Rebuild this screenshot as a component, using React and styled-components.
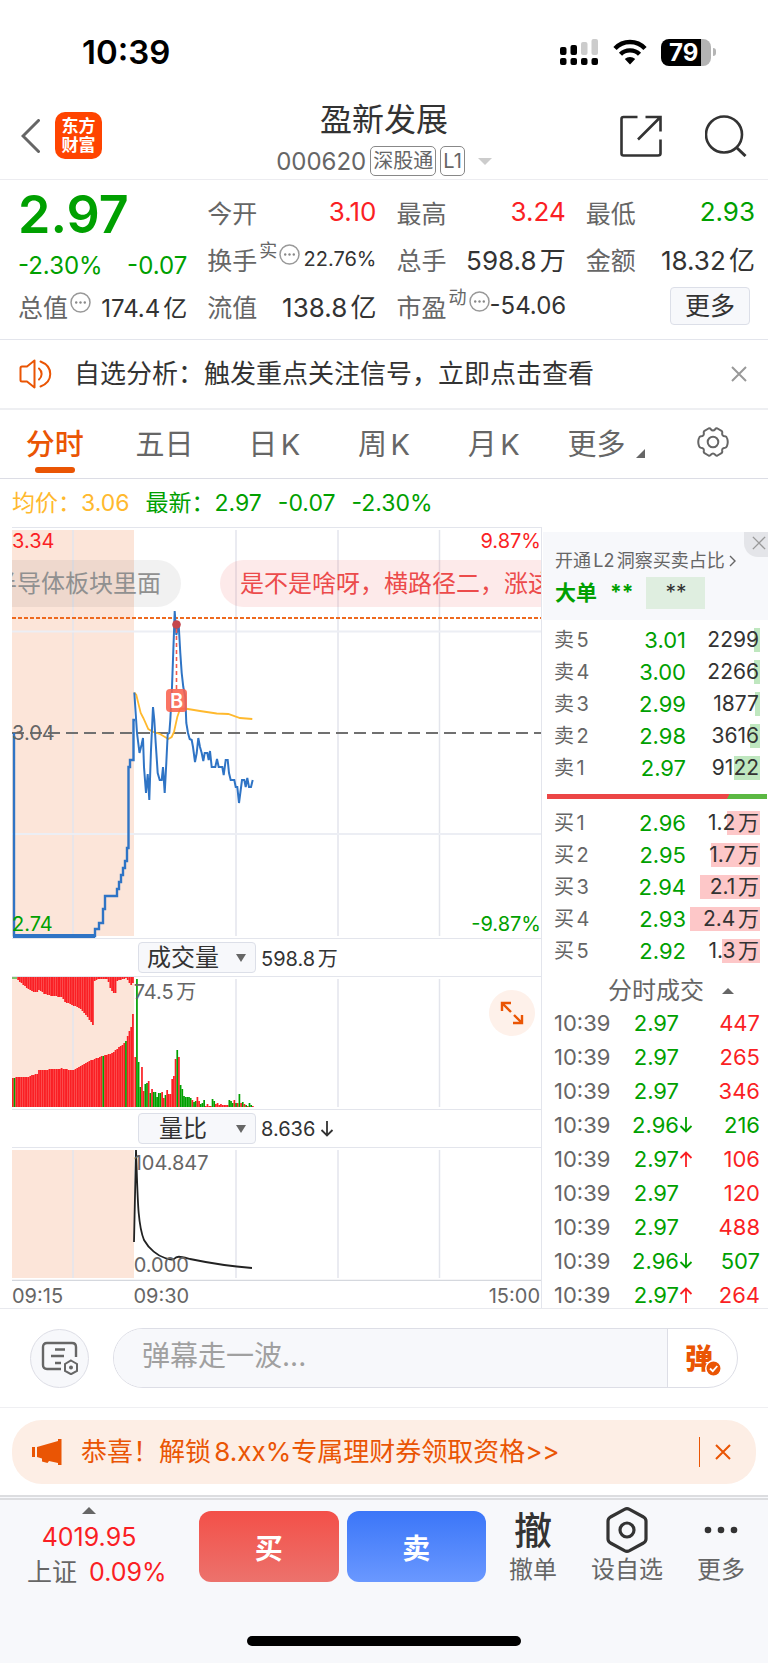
import React, { useState } from 'react';
import styled, { createGlobalStyle } from 'styled-components';

const colors = {
  up: '#fa1f24',
  down: '#00a000',
  brand: '#ea5504',
  text: '#333333',
  sub: '#666666',
  muted: '#999999',
  line: '#e3e5ec',
  panel: '#f7f8fb',
  avg: '#ffb92e',
  price: '#2f74c5',
  preMarket: '#fce5d9',
};

const GlobalStyle = createGlobalStyle`
  * {
    box-sizing: border-box;
  }

  body {
    margin: 0;
    background: #fff;
    color: ${colors.text};
    font-family: Inter, 'Noto Sans CJK SC', sans-serif;
    text-autospace: normal;
  }

  button,
  input,
  select {
    margin: 0;
    padding: 0;
    border: 0;
    background: none;
    color: inherit;
    font-family: inherit;
  }

  svg {
    display: block;
    flex: none;
  }
`;

const Page = styled.div`
  width: 100%;
  overflow: hidden;
`;

const IconButton = styled.button`
  display: flex;
  align-items: center;
  justify-content: center;
  color: ${({ $color }) => $color || colors.text};
`;

/* ---------- status bar ---------- */

const StatusBar = styled.div`
  display: flex;
  align-items: center;
  justify-content: space-between;
  height: 92px;
  padding: 12px 52px 0 82px;
`;

const Clock = styled.span`
  color: #000;
  font-size: 33px;
  font-weight: 600;
`;

const StatusIcons = styled.div`
  display: flex;
  align-items: center;
  gap: 14px;
`;

const Battery = styled.div`
  display: flex;
  align-items: center;
  gap: 2px;

  &::after {
    content: '';
    width: 3px;
    height: 8px;
    border-radius: 0 4px 4px 0;
    background: #b5b5b5;
  }
`;

const BatteryBody = styled.span`
  width: 50px;
  height: 27px;
  padding-left: 8px;
  border-radius: 8px;
  background: linear-gradient(90deg, #000 79%, #b3b3b3 79%);
  color: #fff;
  font-size: 24px;
  font-weight: 700;
  line-height: 27px;
`;

/* ---------- nav ---------- */

const Nav = styled.header`
  display: grid;
  grid-template-columns: 1fr auto 1fr;
  align-items: center;
  height: 88px;
  padding: 0 21px;
  border-bottom: 1px solid #ececf0;
`;

const NavSide = styled.div`
  display: flex;
  align-items: center;
  justify-content: ${({ $end }) => ($end ? 'flex-end' : 'flex-start')};
  gap: ${({ $end }) => ($end ? '43px' : '15px')};
`;

const Logo = styled.a`
  display: flex;
  align-items: center;
  justify-content: center;
  width: 47px;
  height: 47px;
  border-radius: 10px;
  background: #ff4400;
  color: #fff;
  font-size: 17px;
  font-weight: 700;
  line-height: 19px;
  text-align: center;
  text-decoration: none;
`;

const TitleBlock = styled.div`
  display: flex;
  flex-direction: column;
  align-items: center;
  gap: 6px;
  padding-top: 5px;
`;

const StockName = styled.h1`
  margin: 0;
  font-size: 32px;
  font-weight: 400;
  line-height: 40px;
`;

const StockMeta = styled.div`
  display: flex;
  align-items: center;
  gap: 4px;
  height: 30px;
  color: ${colors.sub};
  font-size: 24px;
`;

const Tag = styled.span`
  height: 30px;
  padding: 0 2px;
  border: 1px solid #888;
  border-radius: 5px;
  font-size: 20px;
  line-height: 28px;
`;

const Caret = styled.i`
  width: 0;
  height: 0;
  border: ${({ $size }) => $size || 7}px solid transparent;
  border-${({ $up }) => ($up ? 'bottom' : 'top')}-color: ${({ $color }) => $color || colors.sub};
  border-${({ $up }) => ($up ? 'top' : 'bottom')}-width: 0;
`;

const MetaCaret = styled(Caret)`
  margin-left: 9px;
`;

/* ---------- quote ---------- */

const Quote = styled.section`
  display: grid;
  grid-template-columns: repeat(4, 1fr);
  gap: 20px;
  padding: 8px 13px 10px 18px;
  border-bottom: 1px solid ${colors.line};
`;

const QuoteColumn = styled.div`
  min-width: 0;
`;

const BigPrice = styled.div`
  height: 54px;
  color: ${colors.down};
  font-size: 52px;
  font-weight: 600;
  line-height: 54px;
`;

const Change = styled.div`
  display: flex;
  justify-content: space-between;
  height: 47px;
  color: ${colors.down};
  font-size: 24px;
  line-height: 48px;
`;

const QuoteCell = styled.div`
  display: flex;
  align-items: center;
  justify-content: space-between;
  height: ${({ $short }) => ($short ? 34 : 47)}px;
  white-space: nowrap;
`;

const QuoteLabel = styled.span`
  display: flex;
  align-items: center;
  gap: 2px;
  color: ${colors.sub};
  font-size: 25px;

  small {
    align-self: flex-start;
    font-size: 18px;
    line-height: 20px;
  }

  svg {
    margin-bottom: 8px;
  }
`;

const valueSizes = { small: 20, medium: 24, large: 26 };

const QuoteValue = styled.span`
  color: ${({ $color }) => $color || colors.text};
  font-size: ${({ $size }) => valueSizes[$size]}px;
`;

const MoreCell = styled(QuoteCell)`
  justify-content: flex-end;
  padding-right: 5px;
`;

const MoreButton = styled.button`
  width: 80px;
  height: 38px;
  border: 1px solid #dcdfe8;
  border-radius: 4px;
  background: ${colors.panel};
  font-size: 25px;
  line-height: 36px;
`;

/* ---------- notice ---------- */

const Notice = styled.section`
  display: flex;
  align-items: center;
  height: 70px;
  padding: 0 21px 0 19px;
  border-bottom: 2px solid #eeeff2;
`;

const NoticeText = styled.p`
  flex: 1;
  margin: 0 0 0 21px;
  font-size: 26px;
  line-height: 36px;
  white-space: nowrap;
`;

/* ---------- tabs ---------- */

const Tabs = styled.nav`
  display: grid;
  grid-template-columns: repeat(7, 1fr);
  height: 69px;
  border-bottom: 1px solid #dcdde5;
`;

const Tab = styled.button`
  position: relative;
  display: flex;
  align-items: center;
  justify-content: center;
  gap: 11px;
  padding-bottom: 4px;
  color: ${({ $active }) => ($active ? colors.brand : colors.sub)};
  font-size: 29px;
  font-weight: ${({ $active }) => ($active ? 500 : 400)};
  white-space: nowrap;

  &::after {
    content: '';
    display: ${({ $active }) => ($active ? 'block' : 'none')};
    position: absolute;
    bottom: 5px;
    width: 40px;
    height: 6px;
    border-radius: 3px;
    background: ${colors.brand};
  }
`;

const MoreTab = styled(Tab)`
  padding-left: 6px;
`;

const CornerMark = styled.i`
  align-self: flex-end;
  margin-bottom: 16px;
  border-bottom: 9px solid ${colors.sub};
  border-left: 9px solid transparent;
`;

/* ---------- chart ---------- */

const Legend = styled.div`
  display: flex;
  gap: 16px;
  height: 48px;
  padding-left: 12px;
  color: ${colors.down};
  font-size: 23px;
  line-height: 48px;
  white-space: nowrap;

  span:first-child {
    color: ${colors.avg};
  }
`;

const Market = styled.main`
  display: grid;
  grid-template-columns: minmax(0, 1fr) 227px;
  padding-left: 12px;
  border-bottom: 1px solid #e8e9ee;
`;

const ChartColumn = styled.div`
  border-top: 1px solid ${colors.line};
`;

const Plot = styled.div`
  position: relative;
  height: ${({ $height }) => $height}px;
  overflow: hidden;

  svg {
    width: 100%;
    height: 100%;
  }
`;

const PlotLabel = styled.span`
  position: absolute;
  top: ${({ $top }) => $top}px;
  ${({ $right }) => ($right ? 'right: 0' : 'left: 0')};
  padding-left: ${({ $inset }) => ($inset ? 23 : 0)}%;
  color: ${({ $color }) => $color || colors.sub};
  font-size: 20px;
  line-height: 24px;
`;

const Bullet = styled.span`
  position: absolute;
  top: 32px;
  ${({ $mine }) => ($mine ? 'left: 208px' : 'right: 360px')};
  padding: 0 20px;
  border-radius: 24px;
  background: ${({ $mine }) => ($mine ? 'rgba(238, 50, 50, 0.1)' : 'rgba(60, 60, 60, 0.07)')};
  color: ${({ $mine }) => ($mine ? '#ec4b4b' : '#909090')};
  font-size: 24px;
  line-height: 47px;
  white-space: nowrap;
`;

const IndicatorBar = styled.div`
  display: flex;
  align-items: center;
  gap: 5px;
  height: 38px;
  padding-left: 126px;
  border-bottom: 1px solid ${colors.line};
  font-size: 20px;
`;

const SelectBox = styled.label`
  position: relative;
  display: flex;
  align-items: center;
`;

const Select = styled.select`
  width: 118px;
  height: 31px;
  padding-right: 28px;
  border: 1px solid #dcdfe8;
  border-radius: 4px;
  background: ${colors.panel};
  font-size: 24px;
  line-height: 28px;
  text-align: center;
  text-align-last: center;
  appearance: none;
`;

const SelectArrow = styled.svg`
  position: absolute;
  right: 10px;
`;

const ExpandButton = styled(IconButton)`
  position: absolute;
  top: 13px;
  right: 6px;
  width: 46px;
  height: 46px;
  border-radius: 50%;
  background: #fef1ea;

  svg {
    width: 24px;
    height: 24px;
  }
`;

const TimeAxis = styled.div`
  display: grid;
  grid-template-columns: 23% 1fr auto;
  height: 27px;
  padding-right: 1px;
  color: ${colors.sub};
  font-size: 20px;
  line-height: 30px;
`;

/* ---------- order book ---------- */

const BookColumn = styled.aside`
  padding-top: 5px;
  border-left: 1px solid ${colors.line};
`;

const LevelTwo = styled.div`
  position: relative;
  height: 88px;
  margin-left: 1px;
  padding: 12px 12px 0;
  background: ${colors.panel};
`;

const LevelTwoLink = styled.a`
  display: flex;
  align-items: center;
  gap: 4px;
  color: ${colors.sub};
  font-size: 18px;
  line-height: 33px;
  text-decoration: none;
  white-space: nowrap;
`;

const BigOrders = styled.div`
  display: flex;
  align-items: center;
  gap: 13px;
  color: ${colors.down};
  font-size: 21px;
  font-weight: 700;
  line-height: 32px;
`;

const MaskChip = styled.span`
  width: 59px;
  background: #dfeee0;
  color: ${colors.text};
  font-weight: 400;
  text-align: center;
`;

const LevelTwoClose = styled(IconButton)`
  position: absolute;
  top: 0;
  right: 0;
  width: 24px;
  height: 25px;
  padding: 0 0 4px 5px;
  border-radius: 0 0 0 14px;
  background: #e4e5e9;
`;

const BookTable = styled.table`
  width: 100%;
  margin-top: ${({ $bids }) => ($bids ? 8 : 4)}px;
  border-collapse: collapse;
  table-layout: fixed;
`;

const BookRow = styled.tr`
  height: 32px;

  th,
  td {
    padding: 0;
    line-height: 24px;
  }
`;

const BookLabel = styled.th`
  width: 76px;
  text-indent: 12px;
  color: ${colors.sub};
  font-size: 20px;
  font-weight: 400;
  text-align: left;
`;

const BookPrice = styled.td`
  width: 68px;
  color: ${colors.down};
  font-size: 22px;
  text-align: right;
`;

const BookVolume = styled.td`
  font-size: 21px;
  text-align: right;

  span {
    display: block;
    margin-right: 8px;
    padding-right: 1px;
    background: linear-gradient(${({ $tint }) => $tint}, ${({ $tint }) => $tint}) right / ${({ $bar }) => $bar}px 24px no-repeat;
  }
`;

const RatioBar = styled.div`
  height: 5px;
  margin: 10px 1px 0 5px;
  background: linear-gradient(120deg, #ec4646 82%, #5bb843 82%);
`;

const TradesHeader = styled.button`
  display: flex;
  align-items: center;
  justify-content: center;
  gap: 18px;
  width: 100%;
  height: 39px;
  padding: 9px 0 0 32px;
  color: ${colors.sub};
  font-size: 24px;
  line-height: 30px;
`;

const TradesClip = styled.div`
  height: 302px;
  overflow: hidden;
`;

const TradesTable = styled.table`
  width: 100%;
  border-collapse: collapse;
  table-layout: fixed;
  font-size: 22px;

  tr {
    height: 34px;
  }

  td {
    padding: 0;
    line-height: 24px;
    white-space: nowrap;
  }
`;

const TradeTime = styled.td`
  width: 76px;
  text-indent: 12px;
  color: ${colors.sub};
`;

const TradePrice = styled.td`
  width: 78px;
  color: ${colors.down};

  div {
    display: grid;
    grid-template-columns: 61px 17px;
    align-items: center;
    text-align: right;
  }
`;

const TradeVolume = styled.td`
  color: ${({ $color }) => $color};
  text-align: right;

  span {
    margin-right: 8px;
  }
`;

/* ---------- comment + promo ---------- */

const CommentBar = styled.section`
  display: flex;
  align-items: center;
  gap: 24px;
  height: 99px;
  padding: 0 30px;
  border-bottom: 1px solid #efeff2;
`;

const RoundButton = styled(IconButton)`
  width: 59px;
  height: 59px;
  border: 1px solid #dddee6;
  border-radius: 50%;
  background: ${colors.panel};
`;

const CommentField = styled.div`
  display: flex;
  flex: 1;
  height: 60px;
  border: 1px solid #dddee6;
  border-radius: 30px;
  overflow: hidden;
`;

const CommentInput = styled.input`
  flex: 1;
  min-width: 0;
  padding: 0 20px 5px 28px;
  background: ${colors.panel};
  font-size: 28px;

  &::placeholder {
    color: #a0a0a0;
    opacity: 1;
  }
`;

const BulletToggle = styled.button`
  position: relative;
  width: 70px;
  padding: 0 0 2px 17px;
  border-left: 1px solid #dddee6;
  color: ${colors.brand};
  font-size: 28px;
  font-weight: 900;
  text-align: left;

  svg {
    position: absolute;
    right: 15px;
    bottom: 10px;
  }
`;

const Promo = styled.section`
  display: flex;
  align-items: center;
  height: 64px;
  margin: 12px 12px 11px;
  padding: 0 25px 0 20px;
  border-radius: 30px;
  background: #fdeee5;
  color: ${colors.brand};
`;

const PromoLink = styled.a`
  flex: 1;
  margin-left: 19px;
  color: inherit;
  font-size: 26px;
  line-height: 36px;
  text-decoration: none;
  white-space: nowrap;
`;

const PromoClose = styled(IconButton)`
  height: 30px;
  padding-left: 15px;
  border-left: 1px solid ${colors.brand};
`;

/* ---------- footer ---------- */

const Footer = styled.footer`
  border-top: 5px double #dcdde0;
  background: ${colors.panel};
`;

const Actions = styled.div`
  display: flex;
  align-items: flex-start;
  height: 136px;
  padding: 7px 0 0 27px;
`;

const IndexInfo = styled.div`
  display: flex;
  flex-direction: column;
  align-items: center;
  width: 124px;
  margin-right: 48px;
  color: ${colors.up};
  font-size: 25px;
  line-height: 35px;
  white-space: nowrap;
`;

const IndexValue = styled.span`
  margin-top: 6px;
`;

const IndexChange = styled.span`
  display: flex;
  gap: 12px;
  align-self: flex-start;

  em {
    color: ${colors.sub};
    font-style: normal;
  }
`;

const TradeButtons = styled.div`
  display: flex;
  flex: 1;
  gap: 8px;
  padding-top: 4px;
`;

const TradeButton = styled.button`
  flex: 1;
  height: 71px;
  border-radius: 12px;
  background: ${({ $sell }) =>
    $sell ? 'linear-gradient(#3b76f8, #6a98ff)' : 'linear-gradient(#f35049, #ec726c)'};
  color: #fff;
  font-size: 28px;
  font-weight: 700;
`;

const ToolButtons = styled.div`
  display: grid;
  grid-template-columns: repeat(3, 94px);
`;

const ToolButton = styled.button`
  display: flex;
  flex-direction: column;
  align-items: center;
  color: ${colors.sub};
  font-size: 24px;
  line-height: 36px;
`;

const ToolIcon = styled.span`
  display: flex;
  align-items: center;
  height: 45px;
  color: ${colors.text};
  font-size: 38px;
  font-weight: 500;
`;

const HomeIndicator = styled.div`
  width: 274px;
  height: 10px;
  margin: 0 auto;
  border-radius: 5px;
  background: #000;
`;

const HomeArea = styled.div`
  height: 27px;
`;

/* ---------- data ---------- */

const asks = [
  { label: '卖5', price: '3.01', volume: '2299', bar: 6 },
  { label: '卖4', price: '3.00', volume: '2266', bar: 6 },
  { label: '卖3', price: '2.99', volume: '1877', bar: 5 },
  { label: '卖2', price: '2.98', volume: '3616', bar: 10 },
  { label: '卖1', price: '2.97', volume: '9122', bar: 26 },
];

const bids = [
  { label: '买1', price: '2.96', volume: '1.2万', bar: 33 },
  { label: '买2', price: '2.95', volume: '1.7万', bar: 49 },
  { label: '买3', price: '2.94', volume: '2.1万', bar: 60 },
  { label: '买4', price: '2.93', volume: '2.4万', bar: 70 },
  { label: '买5', price: '2.92', volume: '1.3万', bar: 38 },
];

const trades = [
  { price: '2.97', volume: 447, side: 'up' },
  { price: '2.97', volume: 265, side: 'up' },
  { price: '2.97', volume: 346, side: 'up' },
  { price: '2.96', volume: 216, side: 'down', move: 'down' },
  { price: '2.97', volume: 106, side: 'up', move: 'up' },
  { price: '2.97', volume: 120, side: 'up' },
  { price: '2.97', volume: 488, side: 'up' },
  { price: '2.96', volume: 507, side: 'down', move: 'down' },
  { price: '2.97', volume: 264, side: 'up', move: 'up' },
];

const tabs = ['分时', '五日', '日K', '周K', '月K'];

const auctionLine =
  '2,206 2,409 83,409 83,402 87,402 87,396 91,396 91,382 93,382 93,369 105,369 105,362 107,362 107,355 109,355 109,348 111,348 111,341 113,341 113,334 115,334 115,321 116.5,321 116.5,240 118,240 118,233 121.5,233 121.5,193 123,193';

const priceLine =
  '122.3,165.5 125,206 127.5,226 129.5,218 131,211 132,240 134,266 135.7,247 137.3,273 139,223 141,180 142.3,193 143.7,216 145.7,246 147.7,253 149.7,253 151,240 152.7,266 154.3,236 155.7,207 157.3,206 158.3,193 160,160 161.7,113 162.7,84 164.3,108 166.7,98 168.3,126 169.7,146 171.3,160 173.3,170 174.3,196 176,206 177.7,212 179.7,213 181,220 183,235 184.7,226 186.3,211 188,220 189.7,226 191.3,234 192.7,226 195.3,226 196.7,233 198,224 199.7,240 203.3,240 205,232 206.7,240 210.3,240 211.7,248 213.7,233 215.7,233 217,246 218.7,253 222.3,253 223.7,260 225.3,260 227,276 228.7,263 230,253 232.3,253 233.7,260 235.3,251 237,260 239,260 240.7,253';

const avgLine =
  '122.3,165.5 124.3,168 128.7,186 131.3,191 136.3,202 141.3,205 148,207 156.3,212 159.7,210 162,205 165.3,190 168,182 173,181.5 188,184 204.7,186.5 216.3,187 228,191 240.3,192';

const ratioLine =
  'M122 94 L124 2 C125 30 125.5 52 126.7 65 C128 80 130 87 132 92 C137 101 146 108 153 110 C157 111.5 160 112 162 111 C165 107.5 168 108.5 178 111 C190 113.5 215 118 240 120';

// [x, height] pairs of the call auction volumes
const auctionTop = [
  [6, 3], [13, 9], [18, 13], [25, 16], [27, 13], [33, 17], [40, 19], [50, 20], [53, 25], [61, 28],
  [70, 33], [75, 39], [80, 46], [82, 50], [82.5, 4], [86, 2], [96, 2], [98, 10], [101, 16], [104, 16],
  [104.5, 4], [112, 2], [114, 1], [117, 5], [120, 9], [122, 4],
];
const auctionBottom = [
  [0, 29], [6, 30], [16, 30], [20, 32], [26, 33], [27, 37], [48, 38], [50, 39], [52, 38], [61, 37],
  [68, 40], [75, 45], [83, 48], [91, 51], [101, 54], [105, 58], [113, 64], [115, 67], [116, 72],
  [118, 77], [120, 81], [121, 93], [122, 95],
];

const tradedVolumes =
  'r50 g128 g45 g20 r40 r16 g23 g24 r26 g14 r18 g15 g15 g10 g14 g14 r15 r9 g12 r17 r13 r13 r28 r31 r48 g57 r50 g22 g18 g11 g10 g10 g10 g9 r7 g5 g6 r10 r6 g3 g4 g7 r1 r3 r1 r1 g8 g6 r3 r4 r2 r3 r2 r2 r2 r2 g7 g6 g4 r7 g4 r4 g13 r4 g5 r3 g2 r1 g4 g2 r1'.split(
    ' '
  );

const heightAt = (profile, x) => {
  const next = profile.findIndex(([px]) => px >= x);
  if (next <= 0) return next === 0 ? profile[0][1] : profile[profile.length - 1][1];
  const [x0, y0] = profile[next - 1];
  const [x1, y1] = profile[next];
  return Math.round(y0 + ((x - x0) / (x1 - x0)) * (y1 - y0));
};

/* ---------- icons ---------- */

const CloseIcon = ({ size = 16, width = 2 }) => (
  <svg width={size} height={size} viewBox="0 0 16 16" stroke="currentColor" strokeWidth={width}>
    <path d="M1 1 15 15M15 1 1 15" />
  </svg>
);

const MoreIcon = () => (
  <svg width="21" height="21" viewBox="0 0 21 21" fill="none" stroke="#999" strokeWidth="1.5">
    <circle cx="10.5" cy="10.5" r="9.5" />
    <g fill="#888" stroke="none">
      <circle cx="6.2" cy="10.5" r="1.2" />
      <circle cx="10.5" cy="10.5" r="1.2" />
      <circle cx="14.8" cy="10.5" r="1.2" />
    </g>
  </svg>
);

const ArrowIcon = ({ up, color }) => (
  <svg width="14" height="16" viewBox="0 0 14 16" fill="none" stroke={color || 'currentColor'} strokeWidth="1.8">
    {up ? <path d="M7 16V1.5M1.5 7 7 1.5 12.5 7" /> : <path d="M7 0v14.5M1.5 9 7 14.5 12.5 9" />}
  </svg>
);

const SignalIcon = () => (
  <svg width="40" height="28" viewBox="0 0 40 28">
    <rect x="1" y="9" width="6.500" height="8" rx="2" />
    <rect x="11.500" y="7" width="6.500" height="10" rx="2" />
    <rect x="22" y="4" width="6.500" height="13" rx="2" fill="#ccc" />
    <rect x="32.500" y="1" width="6.500" height="16" rx="2" fill="#ccc" />
    <rect x="1" y="20" width="6.500" height="7" rx="2" />
    <rect x="11.500" y="20" width="6.500" height="7" rx="2" />
    <rect x="22" y="20" width="6.500" height="7" rx="2" />
    <rect x="32.500" y="20" width="6.500" height="7" rx="2" />
  </svg>
);

const WifiIcon = () => (
  <svg width="34" height="26" viewBox="0 0 34 26" fill="none" stroke="#000" strokeWidth="4.4">
    <path d="M2 9.5C10 .8 24 .8 32 9.5" />
    <path d="M7.5 15.3c5-5.2 14-5.2 19 0" />
    <path d="M17 25.5 11.8 20c2.8-2.8 7.6-2.8 10.4 0z" fill="#000" stroke="none" />
  </svg>
);

const ShareIcon = () => (
  <svg width="42" height="42" viewBox="0 0 42 42" fill="none" stroke="currentColor" strokeWidth="2.6">
    <path d="M17.5 2H3.5Q1.5 2 1.5 4V38.5Q1.5 40.5 3.5 40.5H38Q40.5 40.5 40.5 38.5V24.5" />
    <path d="M25.5 2H40.5V16.5M40 2.5 18 24.5" />
  </svg>
);

const SearchIcon = () => (
  <svg width="42" height="42" viewBox="0 0 42 42" fill="none" stroke="currentColor" strokeWidth="2.6">
    <circle cx="19" cy="19.5" r="18" />
    <path d="M31 32l9.5 9" strokeWidth="3" />
  </svg>
);

const SpeakerIcon = () => (
  <svg width="34" height="30" viewBox="0 0 34 30" fill="none" stroke={colors.brand} strokeWidth="2" strokeLinejoin="round">
    <path d="M15.5 1.5 8 7.5H3Q1.5 7.5 1.5 9V21Q1.5 22.5 3 22.5H8L15.5 28.5Z" />
    <path d="M20 9.5c3.5 3 3.5 8 0 11" strokeLinecap="round" />
    <path d="M21.5 2.5c13 5 13 20 0 25" strokeLinecap="round" />
  </svg>
);

const SettingIcon = () => (
  <svg width="32" height="30" viewBox="0 0 32 30" fill="none" stroke={colors.sub} strokeWidth="2" strokeLinejoin="round">
    <path d="M11.5 1.5Q13 1 13.8 2.2Q16 4.6 18.2 2.2Q19 1 20.5 1.5L24.5 3.8Q25.5 4.5 25.2 6Q24.8 9 28 9.3Q29.5 9.5 30 11Q31.5 15 30 19Q29.5 20.5 28 20.7Q24.8 21 25.2 24Q25.5 25.5 24.5 26.2L20.5 28.5Q19 29 18.2 27.8Q16 25.4 13.8 27.8Q13 29 11.5 28.5L7.5 26.2Q6.5 25.5 6.8 24Q7.2 21 4 20.7Q2.5 20.5 2 19Q.5 15 2 11Q2.5 9.5 4 9.3Q7.2 9 6.8 6Q6.5 4.5 7.5 3.8Z" />
    <circle cx="16" cy="15" r="5.3" />
  </svg>
);

const HornIcon = () => (
  <svg width="30" height="26" viewBox="0 0 30 26" fill="currentColor">
    <path d="M0 8h3v10H0zM5 8 26 2V0h3.5v26H26v-2l-9-2-1.5 2L10 22.5V19.5L5 18z" />
  </svg>
);

const CommentSettingIcon = () => (
  <svg width="38" height="34" viewBox="0 0 38 34" fill="none" stroke={colors.sub} strokeWidth="2.4">
    <path d="M20 28H6Q2 28 2 24V6Q2 2 6 2H31Q35 2 35 6V16" />
    <path d="M14 8.5H24M10 15H23M14 22H20" />
    <path d="M30 19.5 36 23V30L30 33.2 24 30V23Z" strokeWidth="2" />
    <circle cx="30" cy="26.5" r="2" fill={colors.sub} stroke="none" />
  </svg>
);

const HexagonIcon = () => (
  <svg width="42" height="46" viewBox="0 0 42 46" fill="none" stroke="currentColor" strokeWidth="3.2">
    <path d="M18.5 2.3Q21 1 23.5 2.3L37.5 10Q40 11.5 40 14V32Q40 34.5 37.5 36L23.5 43.7Q21 45 18.5 43.7L4.5 36Q2 34.5 2 32V14Q2 11.5 4.5 10Z" />
    <circle cx="21" cy="23" r="7" />
  </svg>
);

/* ---------- blocks ---------- */

const VerticalGrid = ({ top = 2, bottom }) => (
  <g stroke={colors.line} strokeWidth="1.5">
    {[61, 224, 326, 427.5].map((x) => (
      <line key={x} x1={x} x2={x} y1={top} y2={bottom} />
    ))}
  </g>
);

const PriceChart = () => (
  <Plot $height={411}>
    <svg viewBox="0 1 529 411" preserveAspectRatio="none" fill="none">
      <rect x="0" y="3" width="122" height="406" fill={colors.preMarket} />
      <VerticalGrid top={3} bottom={409} />
      <path d="M0 104.5H529M0 307H529" stroke="#eceef4" strokeWidth="2" />
      <path d="M0 411.5H529" stroke={colors.line} />
      <path d="M0 206H529" stroke="#707070" strokeWidth="2" strokeDasharray="12 6" />
      <path d="M0 91H529" stroke="#ee6a1f" strokeWidth="2.2" strokeDasharray="4 2" />
      <polyline points={avgLine} stroke={colors.avg} strokeWidth="1.8" />
      <polyline points={auctionLine} stroke={colors.price} strokeWidth="2.4" />
      <path d="M1 409H83" stroke={colors.price} strokeWidth="4" />
      <polyline points={priceLine} stroke={colors.price} strokeWidth="2" />
      <path d="M164.5 102V163" stroke="#f55a4c" strokeWidth="1.6" strokeDasharray="4 3" />
      <circle cx="164.5" cy="97.5" r="4.3" fill="#c5464d" />
      <rect x="154" y="162" width="21" height="23" rx="4" fill="#f9624f" fillOpacity=".88" />
      <text x="164.5" y="180.5" fill="#fff" fontSize="20" fontWeight="600" textAnchor="middle">
        B
      </text>
    </svg>
    <PlotLabel $top={1} $color={colors.up}>3.34</PlotLabel>
    <PlotLabel $top={1} $right $color={colors.up}>9.87%</PlotLabel>
    <PlotLabel $top={193}>3.04</PlotLabel>
    <PlotLabel $top={384} $color={colors.down}>2.74</PlotLabel>
    <PlotLabel $top={384} $right $color={colors.down}>-9.87%</PlotLabel>
    <Bullet>半导体板块里面</Bullet>
    <Bullet $mine>是不是啥呀，横路径二，涨这</Bullet>
  </Plot>
);

const VolumeChart = () => (
  <Plot $height={133}>
    <svg viewBox="0 0 529 133" preserveAspectRatio="none">
      <rect width="122" height="130" fill={colors.preMarket} />
      <VerticalGrid bottom={130} />
      <path d="M0 132.5H529" stroke={colors.line} />
      <path d="M0 1H5" stroke={colors.down} />
      {Array.from({ length: 70 }, (_, i) => {
        const x = i * 1.74;
        const low = heightAt(auctionBottom, x + 1);
        const green = [1, 52, 65].includes(i);
        return (
          <g key={i} fill={colors.up}>
            {x > 5 && <rect x={x} y="0" width="1.75" height={heightAt(auctionTop, x + 1)} />}
            <rect x={x} y={130 - low} width="1.75" height={low} fill={green ? colors.down : colors.up} />
          </g>
        );
      })}
      {tradedVolumes.map((item, i) => {
        const height = Number(item.slice(1));
        return (
          <rect
            key={i}
            x={122.4 + i * 1.68}
            y={130 - height}
            width="1.7"
            height={height}
            fill={item[0] === 'r' ? colors.up : colors.down}
          />
        );
      })}
    </svg>
    <PlotLabel $top={3} $inset>74.5万</PlotLabel>
    <ExpandButton $color={colors.brand} aria-label="全屏">
      <svg viewBox="0 0 24 24" fill="none" stroke="currentColor" strokeWidth="2.4">
        <path d="M2 10V2H11M2 2l9 9M22 14v8H13M22 22l-8-8" />
      </svg>
    </ExpandButton>
  </Plot>
);

const RatioChart = () => (
  <Plot $height={133}>
    <svg viewBox="0 0 529 133" preserveAspectRatio="none" fill="none">
      <rect y="2" width="122" height="128" fill={colors.preMarket} />
      <VerticalGrid bottom={130} />
      <path d="M0 132.5H529" stroke="#d5d8de" strokeWidth="1.5" />
      <path d={ratioLine} stroke="#222" strokeWidth="1.8" />
    </svg>
    <PlotLabel $top={3} $inset>104.847</PlotLabel>
    <PlotLabel $top={105} $inset>0.000</PlotLabel>
  </Plot>
);

const Indicator = ({ name, options, children }) => {
  const [value, setValue] = useState(options[0]);

  return (
    <IndicatorBar>
      <SelectBox>
        <Select aria-label={name} value={value} onChange={(e) => setValue(e.target.value)}>
          {options.map((option) => (
            <option key={option}>{option}</option>
          ))}
        </Select>
        <SelectArrow width="10" height="8" viewBox="0 0 10 8" fill={colors.sub}>
          <path d="M0 0H10L5 8Z" />
        </SelectArrow>
      </SelectBox>
      {children}
    </IndicatorBar>
  );
};

const Book = ({ rows, tint, isBids }) => (
  <BookTable $bids={isBids}>
    <tbody>
      {rows.map((row) => (
        <BookRow key={row.label}>
          <BookLabel scope="row">{row.label}</BookLabel>
          <BookPrice>{row.price}</BookPrice>
          <BookVolume $tint={tint} $bar={row.bar}>
            <span>{row.volume}</span>
          </BookVolume>
        </BookRow>
      ))}
    </tbody>
  </BookTable>
);

const Cell = ({ label, mark, info, value, color, size = 'large', short }) => (
  <QuoteCell $short={short}>
    <QuoteLabel>
      {label}
      {mark && <small>{mark}</small>}
      {info && <MoreIcon />}
    </QuoteLabel>
    <QuoteValue $color={color} $size={size}>{value}</QuoteValue>
  </QuoteCell>
);

const App = () => {
  const [activeTab, setActiveTab] = useState('分时');
  const [comment, setComment] = useState('');

  return (
    <Page>
      <GlobalStyle />

      <StatusBar>
        <Clock>10:39</Clock>
        <StatusIcons>
          <SignalIcon />
          <WifiIcon />
          <Battery>
            <BatteryBody>79</BatteryBody>
          </Battery>
        </StatusIcons>
      </StatusBar>

      <Nav>
        <NavSide>
          <IconButton aria-label="返回" $color={colors.sub}>
            <svg width="19" height="34" viewBox="0 0 19 34" fill="none" stroke="currentColor" strokeWidth="3">
              <path d="M17.5 1.5 2 17 17.5 32.5" strokeLinecap="round" />
            </svg>
          </IconButton>
          <Logo href="#home">
            东方
            <br />
            财富
          </Logo>
        </NavSide>
        <TitleBlock>
          <StockName>盈新发展</StockName>
          <StockMeta>
            000620
            <Tag>深股通</Tag>
            <Tag>L1</Tag>
            <MetaCaret $color="#ccc" />
          </StockMeta>
        </TitleBlock>
        <NavSide $end>
          <IconButton aria-label="分享">
            <ShareIcon />
          </IconButton>
          <IconButton aria-label="搜索">
            <SearchIcon />
          </IconButton>
        </NavSide>
      </Nav>

      <Quote>
        <QuoteColumn>
          <BigPrice>2.97</BigPrice>
          <Change>
            <span>-2.30%</span>
            <span>-0.07</span>
          </Change>
          <Cell short label="总值" info value="174.4亿" size="medium" />
        </QuoteColumn>
        <QuoteColumn>
          <Cell label="今开" value="3.10" color={colors.up} />
          <Cell label="换手" mark="实" info value="22.76%" size="small" />
          <Cell label="流值" value="138.8亿" />
        </QuoteColumn>
        <QuoteColumn>
          <Cell label="最高" value="3.24" color={colors.up} />
          <Cell label="总手" value="598.8万" />
          <Cell label="市盈" mark="动" info value="-54.06" size="medium" />
        </QuoteColumn>
        <QuoteColumn>
          <Cell label="最低" value="2.93" color={colors.down} />
          <Cell label="金额" value="18.32亿" />
          <MoreCell>
            <MoreButton>更多</MoreButton>
          </MoreCell>
        </QuoteColumn>
      </Quote>

      <Notice>
        <SpeakerIcon />
        <NoticeText>自选分析：触发重点关注信号，立即点击查看</NoticeText>
        <IconButton aria-label="关闭" $color={colors.muted}>
          <CloseIcon />
        </IconButton>
      </Notice>

      <Tabs>
        {tabs.map((tab) => (
          <Tab key={tab} $active={tab === activeTab} onClick={() => setActiveTab(tab)}>
            {tab}
          </Tab>
        ))}
        <MoreTab>
          更多
          <CornerMark />
        </MoreTab>
        <Tab aria-label="设置">
          <SettingIcon />
        </Tab>
      </Tabs>

      <Legend>
        <span>均价：3.06</span>
        <span>最新：2.97</span>
        <span>-0.07</span>
        <span>-2.30%</span>
      </Legend>

      <Market>
        <ChartColumn>
          <PriceChart />
          <Indicator name="副图一" options={['成交量', '量比']}>
            598.8万
          </Indicator>
          <VolumeChart />
          <Indicator name="副图二" options={['量比', '成交量']}>
            8.636 <ArrowIcon />
          </Indicator>
          <RatioChart />
          <TimeAxis>
            <span>09:15</span>
            <span>09:30</span>
            <span>15:00</span>
          </TimeAxis>
        </ChartColumn>

        <BookColumn>
          <LevelTwo>
            <LevelTwoLink href="#level2">
              开通L2洞察买卖占比
              <svg width="7" height="12" viewBox="0 0 7 12" fill="none" stroke="currentColor" strokeWidth="1.4">
                <path d="M1 1 6 6 1 11" />
              </svg>
            </LevelTwoLink>
            <BigOrders>
              <span>大单</span>
              <span>**</span>
              <MaskChip>**</MaskChip>
            </BigOrders>
            <LevelTwoClose aria-label="关闭" $color={colors.muted}>
              <CloseIcon size={14} width={1.6} />
            </LevelTwoClose>
          </LevelTwo>
          <Book rows={asks} tint="#bfe7bf" />
          <RatioBar />
          <Book rows={bids} tint="#fdc7c8" isBids />
          <TradesHeader>
            分时成交
            <Caret $up $size={6} />
          </TradesHeader>
          <TradesClip>
            <TradesTable>
              <tbody>
                {trades.map((trade, i) => (
                  <tr key={i}>
                    <TradeTime>10:39</TradeTime>
                    <TradePrice>
                      <div>
                        {trade.price}
                        {trade.move && <ArrowIcon up={trade.move === 'up'} color={colors[trade.move]} />}
                      </div>
                    </TradePrice>
                    <TradeVolume $color={colors[trade.side]}>
                      <span>{trade.volume}</span>
                    </TradeVolume>
                  </tr>
                ))}
              </tbody>
            </TradesTable>
          </TradesClip>
        </BookColumn>
      </Market>

      <CommentBar>
        <RoundButton aria-label="弹幕设置">
          <CommentSettingIcon />
        </RoundButton>
        <CommentField>
          <CommentInput
            aria-label="弹幕"
            placeholder="弹幕走一波..."
            value={comment}
            onChange={(e) => setComment(e.target.value)}
          />
          <BulletToggle>
            弹
            <svg width="17" height="17" viewBox="0 0 17 17">
              <circle cx="8.5" cy="8.5" r="7.7" fill={colors.brand} stroke="#fff" strokeWidth="1.5" />
              <path d="M5 8.5 7.8 11.2 12.3 6" fill="none" stroke="#fff" strokeWidth="1.8" />
            </svg>
          </BulletToggle>
        </CommentField>
      </CommentBar>

      <Promo>
        <HornIcon />
        <PromoLink href="#coupon">恭喜！解锁8.xx%专属理财券领取资格&gt;&gt;</PromoLink>
        <PromoClose aria-label="关闭" $color={colors.brand}>
          <CloseIcon />
        </PromoClose>
      </Promo>

      <Footer>
        <Actions>
          <IndexInfo>
            <Caret $up />
            <IndexValue>4019.95</IndexValue>
            <IndexChange>
              <em>上证</em>
              0.09%
            </IndexChange>
          </IndexInfo>
          <TradeButtons>
            <TradeButton>买</TradeButton>
            <TradeButton $sell>卖</TradeButton>
          </TradeButtons>
          <ToolButtons>
            <ToolButton>
              <ToolIcon>撤</ToolIcon>
              撤单
            </ToolButton>
            <ToolButton>
              <ToolIcon>
                <HexagonIcon />
              </ToolIcon>
              设自选
            </ToolButton>
            <ToolButton>
              <ToolIcon>
                <svg width="34" height="8" viewBox="0 0 34 8" fill="currentColor">
                  <circle cx="4" cy="4" r="3.3" />
                  <circle cx="17" cy="4" r="3.3" />
                  <circle cx="30" cy="4" r="3.3" />
                </svg>
              </ToolIcon>
              更多
            </ToolButton>
          </ToolButtons>
        </Actions>
        <HomeArea>
          <HomeIndicator />
        </HomeArea>
      </Footer>
    </Page>
  );
};

export default App;
